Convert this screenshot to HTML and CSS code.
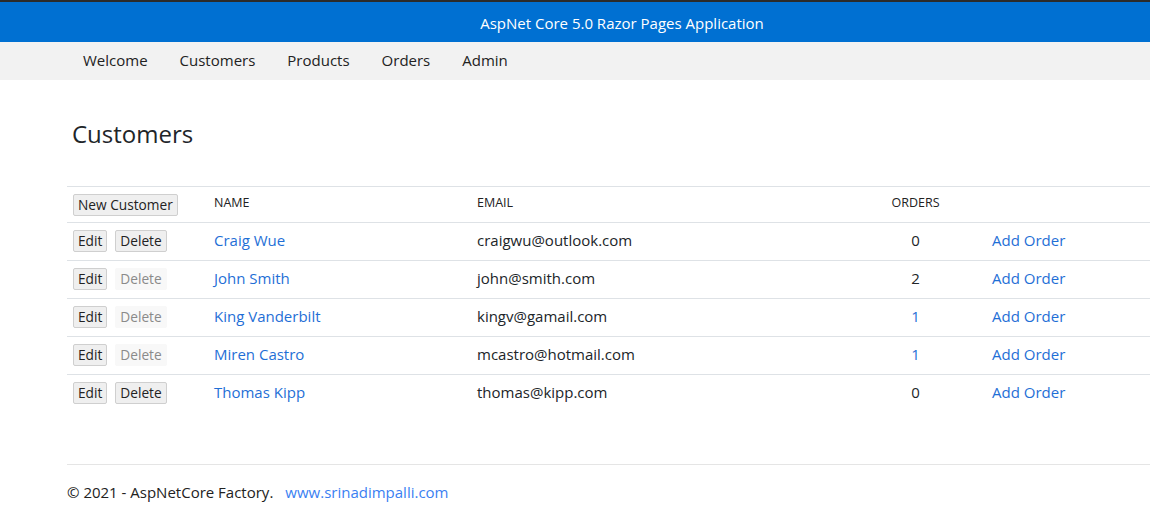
FILE: index.html
```html
<!DOCTYPE html>
<html lang="en">
<head>
<meta charset="utf-8">
<title>Customers</title>
<link rel="stylesheet" href="styles.css">
</head>
<body>
<header class="topbar">AspNet Core 5.0 Razor Pages Application</header>
<nav class="nav">
  <a href="#">Welcome</a>
  <a href="#">Customers</a>
  <a href="#">Products</a>
  <a href="#">Orders</a>
  <a href="#">Admin</a>
</nav>
<main class="main">
  <h1 class="title">Customers</h1>
  <table class="grid">
    <colgroup>
      <col class="c-act"><col class="c-name"><col class="c-email"><col class="c-orders"><col class="c-add">
    </colgroup>
    <thead>
      <tr>
        <th><button class="btn">New Customer</button></th>
        <th>NAME</th>
        <th>EMAIL</th>
        <th class="center">ORDERS</th>
        <th></th>
      </tr>
    </thead>
    <tbody>
      <tr>
        <td><button class="btn">Edit</button><button class="btn">Delete</button></td>
        <td><a href="#">Craig Wue</a></td>
        <td>craigwu@outlook.com</td>
        <td class="center">0</td>
        <td><a href="#">Add Order</a></td>
      </tr>
      <tr>
        <td><button class="btn">Edit</button><button class="btn" disabled>Delete</button></td>
        <td><a href="#">John Smith</a></td>
        <td>john@smith.com</td>
        <td class="center">2</td>
        <td><a href="#">Add Order</a></td>
      </tr>
      <tr>
        <td><button class="btn">Edit</button><button class="btn" disabled>Delete</button></td>
        <td><a href="#">King Vanderbilt</a></td>
        <td>kingv@gamail.com</td>
        <td class="center"><a href="#">1</a></td>
        <td><a href="#">Add Order</a></td>
      </tr>
      <tr>
        <td><button class="btn">Edit</button><button class="btn" disabled>Delete</button></td>
        <td><a href="#">Miren Castro</a></td>
        <td>mcastro@hotmail.com</td>
        <td class="center"><a href="#">1</a></td>
        <td><a href="#">Add Order</a></td>
      </tr>
      <tr>
        <td><button class="btn">Edit</button><button class="btn">Delete</button></td>
        <td><a href="#">Thomas Kipp</a></td>
        <td>thomas@kipp.com</td>
        <td class="center">0</td>
        <td><a href="#">Add Order</a></td>
      </tr>
    </tbody>
  </table>
  <footer class="footer">
    <span>© 2021 - AspNetCore Factory.</span>
    <a href="#" class="footlink">www.srinadimpalli.com</a>
  </footer>
</main>
</body>
</html>
```
FILE: styles.css
```css
* { box-sizing: border-box; }
html, body { margin: 0; padding: 0; }
body {
  font-family: "Open Sans", "Noto Sans", sans-serif;
  font-size: 15px;
  color: #212529;
  background: #fff;
}
a { color: #1f6fd6; text-decoration: none; }

.topbar {
  border-top: 2px solid #2b2b2b;
  height: 42px;
  background: #0070d2;
  color: #fff;
  display: flex;
  align-items: center;
  justify-content: center;
  padding: 1px 0 0 94px;
  font-size: 15px;
}

.nav {
  height: 38px;
  background: #f2f2f2;
  display: flex;
  align-items: center;
  gap: 32px;
  padding: 0 0 2px 83px;
}
.nav a { color: #222; font-size: 15px; }

.main { padding-left: 67px; }

.title {
  margin: 0;
  padding: 38px 0 0 5px;
  height: 106px;
  font-size: 24px;
  font-weight: 400;
  line-height: 32px;
  color: #212529;
}

.grid {
  width: 100%;
  border-collapse: collapse;
  table-layout: fixed;
}
.c-act { width: 141px; }
.c-name { width: 263px; }
.c-email { width: 374px; }
.c-orders { width: 141px; }

.grid th, .grid td {
  border-top: 1px solid #dee2e6;
  padding: 0 6px;
  text-align: left;
  vertical-align: middle;
}
.grid th {
  height: 36px;
  font-size: 12.5px;
  font-weight: 400;
  color: #222;
  padding-bottom: 4px;
}
.grid td { height: 38px; padding-bottom: 4px; }
.grid .center { text-align: center; }
.grid td:first-child { padding-top: 0; padding-bottom: 2px; }
.grid th:first-child { padding-top: 0; padding-bottom: 0; }

.btn {
  font-family: "Open Sans", "Noto Sans", sans-serif;
  font-size: 13.7px;
  height: 22px;
  line-height: 18px;
  padding: 0 4px;
  margin: 0 8px 0 0;
  background: #efefef;
  border: 1px solid #cfcfcf;
  border-radius: 2px;
  color: #222;
  vertical-align: middle;
}
.btn:disabled {
  background: #f8f8f8;
  border-color: #f8f8f8;
  color: #8a8a8a;
}

.footer {
  margin-top: 51px;
  border-top: 1px solid #e5e5e5;
  height: 56px;
  display: flex;
  align-items: center;
  gap: 12px;
  padding-top: 0;
  font-size: 15px;
  color: #222;
}
.footlink { color: #3a7ff2; }
```
